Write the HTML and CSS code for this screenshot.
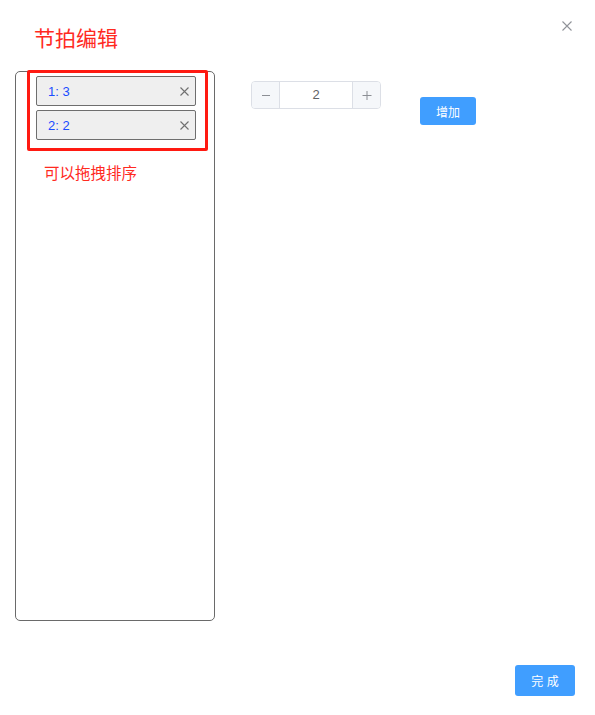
FILE: index.html
```html
<!DOCTYPE html>
<html>

<head>
    <meta charset="utf-8">
    <title>节拍编辑</title>
    <link rel="stylesheet" href="styles.css">
</head>

<body>
    <div class="dialog">
        <div class="header">
            <span class="title">节拍编辑</span>
        </div>
        <button class="close" aria-label="关闭">
            <svg width="10" height="10" viewBox="0 0 10 10">
                <path d="M0.5 0.5L9.5 9.5M9.5 0.5L0.5 9.5" stroke="#909399" stroke-width="1.1" fill="none" />
            </svg>
        </button>

        <div class="content">
            <div class="panel">
                <div class="beat">
                    <span>1: 3</span>
                    <svg width="9" height="9" viewBox="0 0 9 9">
                        <path d="M0.5 0.5L8.5 8.5M8.5 0.5L0.5 8.5" stroke="#707070" stroke-width="1.1" fill="none" />
                    </svg>
                </div>
                <div class="beat">
                    <span>2: 2</span>
                    <svg width="9" height="9" viewBox="0 0 9 9">
                        <path d="M0.5 0.5L8.5 8.5M8.5 0.5L0.5 8.5" stroke="#707070" stroke-width="1.1" fill="none" />
                    </svg>
                </div>
                <div class="hint">可以拖拽排序</div>
            </div>

            <div class="number">
                <span class="step minus">
                    <svg width="10" height="10" viewBox="0 0 10 10">
                        <path d="M1 5.5H9" stroke="#8c8f95" stroke-width="1" fill="none" />
                    </svg>
                </span>
                <span class="value">2</span>
                <span class="step plus">
                    <svg width="10" height="10" viewBox="0 0 10 10">
                        <path d="M0.5 5.5H9.5M5 1V10" stroke="#8c8f95" stroke-width="1" fill="none" />
                    </svg>
                </span>
            </div>

            <button class="btn add">增加</button>
        </div>

        <div class="footer">
            <button class="btn done">完 成</button>
        </div>

        <div class="mark"></div>
    </div>
</body>

</html>
```

FILE: styles.css
```css
body {
    margin: 0;
    padding: 0;
    background: #fff;
    font-family: "Liberation Sans", "Noto Sans CJK SC", sans-serif;
}

.dialog {
    position: relative;
    width: 595px;
    height: 715px;
}

.header {
    padding: 27px 0 0 34px;
    height: 24px;
}

.header .title {
    font-size: 21px;
    line-height: 24px;
    color: #ff2a1f;
}

.close {
    position: absolute;
    top: 21px;
    right: 23px;
    padding: 0;
    border: none;
    background: none;
    line-height: 0;
}

.content {
    display: flex;
    flex-direction: row;
    align-items: flex-start;
    margin-top: 20px;
    padding-left: 15px;
}

.panel {
    box-sizing: border-box;
    width: 200px;
    height: 550px;
    border: 1px solid #6a6a6a;
    border-radius: 5px;
    padding: 4px 0 0 20px;
    display: flex;
    flex-direction: column;
    gap: 4px;
}

.beat {
    box-sizing: border-box;
    width: 160px;
    height: 30px;
    display: flex;
    flex-direction: row;
    align-items: center;
    justify-content: space-between;
    padding: 0 6px 0 11px;
    background: #efefef;
    border: 1px solid #6e6e6e;
    border-radius: 2px;
    font-size: 13px;
    color: #1a4cff;
}

.hint {
    margin: 19px 0 0 8px;
    font-size: 15.5px;
    line-height: 22px;
    color: #ff2a1f;
}

.number {
    box-sizing: border-box;
    width: 130px;
    height: 28px;
    margin: 10px 0 0 36px;
    display: flex;
    flex-direction: row;
    border: 1px solid #dcdfe6;
    border-radius: 4px;
    overflow: hidden;
}

.number .step {
    width: 27px;
    display: flex;
    align-items: center;
    justify-content: center;
    background: #f5f7fa;
}

.number .minus {
    border-right: 1px solid #dcdfe6;
}

.number .plus {
    border-left: 1px solid #dcdfe6;
}

.number .value {
    flex: 1;
    text-align: center;
    font-size: 13px;
    line-height: 26px;
    color: #606266;
}

.btn {
    border: none;
    border-radius: 3px;
    background: #409eff;
    color: #fff;
    font-family: "Liberation Sans", "Noto Sans CJK SC", sans-serif;
    font-size: 12px;
    padding: 0;
}

.add {
    width: 56px;
    height: 28px;
    margin: 26px 0 0 39px;
}

.footer {
    display: flex;
    justify-content: flex-end;
    margin-top: 44px;
    padding-right: 20px;
}

.done {
    width: 60px;
    height: 31px;
}

/* red annotation box drawn over the list */
.mark {
    position: absolute;
    left: 27px;
    top: 70px;
    width: 175px;
    height: 75px;
    border: 3px solid #ff1a12;
    border-radius: 2px;
}
```
